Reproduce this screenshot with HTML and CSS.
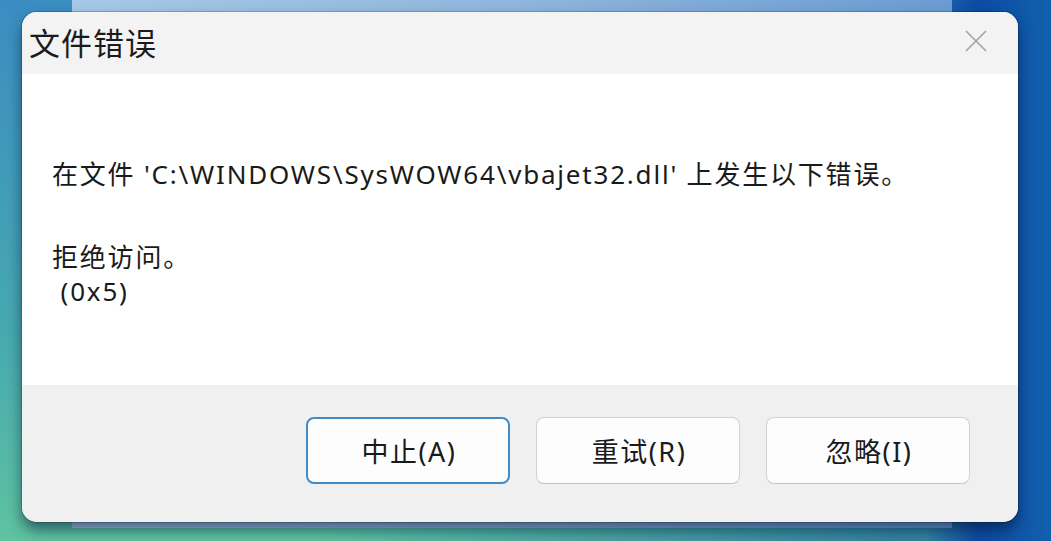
FILE: index.html
```html
<!DOCTYPE html>
<html lang="zh-CN">
<head>
<meta charset="utf-8">
<title>文件错误</title>
<link rel="stylesheet" href="styles.css">
</head>
<body>
<div class="desktop">
  <div class="behind-window"></div>
  <div class="dialog">
    <div class="titlebar">
      <span class="title">文件错误</span>
      <span class="close" aria-label="关闭">
        <svg width="22" height="22" viewBox="0 0 22 22"><path d="M1 1 L21 21 M21 1 L1 21" stroke="#a3a3a3" stroke-width="1.6" fill="none"/></svg>
      </span>
    </div>
    <div class="content">
      <p class="line first">在文件 'C:\WINDOWS\SysWOW64\vbajet32.dll' 上发生以下错误。</p>
      <p class="line second">拒绝访问。</p>
      <p class="line">&nbsp;(0x5)</p>
    </div>
    <div class="footer">
      <button class="btn default">中止(A)</button>
      <button class="btn">重试(R)</button>
      <button class="btn">忽略(I)</button>
    </div>
  </div>
</div>
</body>
</html>
```

FILE: styles.css
```css
html, body {
  margin: 0;
  padding: 0;
  width: 1051px;
  height: 541px;
  overflow: hidden;
}
body {
  font-family: "Noto Sans", "Noto Sans CJK SC", sans-serif;
}
.desktop {
  position: relative;
  width: 1051px;
  height: 541px;
  background:
    linear-gradient(to right, rgba(0,0,0,0) 0%, rgba(0,0,0,0) 88%, #0c4ba2 93%, #1260ad 100%),
    linear-gradient(to right, rgba(0,0,0,0) 30%, rgba(20,90,160,0.6) 85%),
    linear-gradient(to bottom, #3a8dc2 0%, #47a8b0 60%, #5ec3a0 100%);
}
.behind-window {
  position: absolute;
  left: 72px;
  top: 0;
  width: 880px;
  height: 528px;
  background: linear-gradient(to right, #a6c8e6 0%, #8fb6dc 50%, #6a9bd2 100%);
}
.dialog {
  position: absolute;
  left: 22px;
  top: 12px;
  width: 996px;
  height: 510px;
  border-radius: 15px;
  background: #f3f3f3;
  box-shadow: 0 0 0 1px rgba(0,0,0,0.18), 0 8px 14px rgba(0,20,50,0.55);
  display: flex;
  flex-direction: column;
  overflow: hidden;
}
.titlebar {
  height: 62px;
  flex: none;
  display: flex;
  align-items: center;
  justify-content: space-between;
  padding: 0 31px 0 7px;
  background: #f3f3f3;
}
.title {
  font-size: 31px;
  letter-spacing: 1px;
  color: #1b1b1b;
  position: relative;
  top: -2px;
}
.close {
  display: flex;
  width: 22px;
  height: 22px;
  position: relative;
  top: -2px;
}
.content {
  height: 311px;
  flex: none;
  background: #ffffff;
  padding: 83px 0 0 30px;
  box-sizing: border-box;
}
.line {
  margin: 0;
  font-size: 26px;
  letter-spacing: 1.8px;
  line-height: 34px;
  color: #1a1a1a;
  white-space: pre;
}
.line.first {
  margin-bottom: 49px;
}
.footer {
  flex: 1;
  background: #f0f0f0;
  display: flex;
  justify-content: flex-end;
  align-items: flex-start;
  gap: 26px;
  padding: 32px 48px 0 0;
}
.btn {
  width: 204px;
  height: 67px;
  border-radius: 8px;
  border: 1px solid #d2d2d2;
  border-bottom-color: #c4c4c4;
  background: #fdfdfd;
  font-family: "Noto Sans", "Noto Sans CJK SC", sans-serif;
  font-size: 27px;
  letter-spacing: 1.5px;
  color: #1a1a1a;
  padding: 0 0 0 2px;
  display: flex;
  align-items: center;
  justify-content: center;
}
.btn.default {
  border: 2px solid #3f8ccb;
}
```
